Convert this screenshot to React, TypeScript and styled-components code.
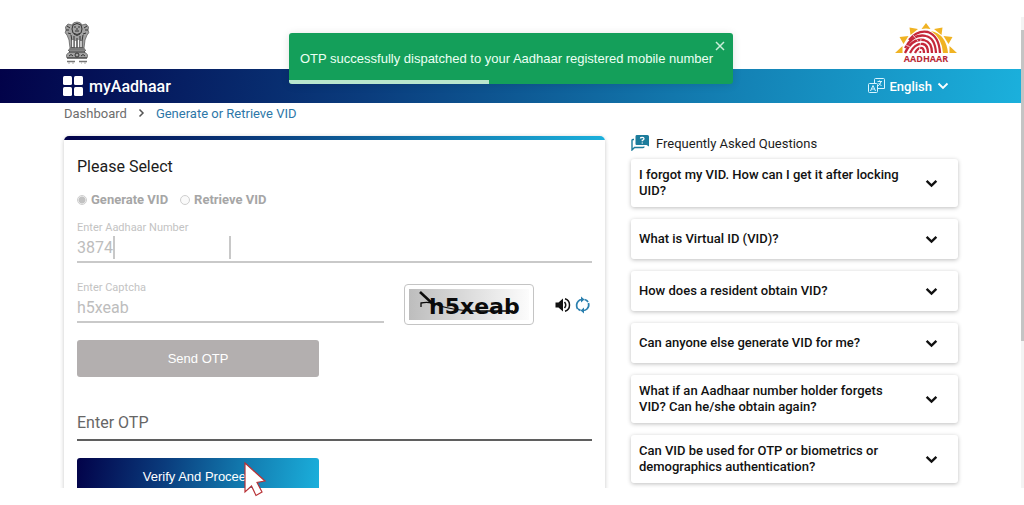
import React from "react";
import styled, { createGlobalStyle } from "styled-components";

const brandGradient = "linear-gradient(100deg, #020249 0%, #0a3c7d 36%, #1277ac 66%, #1bb0dc 100%)";

const GlobalStyle = createGlobalStyle`
  *, *::before, *::after { box-sizing: border-box; }
  body { margin: 0; background: #fff; font-family: Roboto, "Liberation Sans", sans-serif; color: #1c1c1c; }
  button, input { font-family: inherit; }
`;

const Screen = styled.div`
  position: relative;
  height: 100vh;
  padding: 17px 0;
  display: flex;
  overflow: hidden;
`;

const Page = styled.div`
  flex: 1;
  min-width: 0;
  overflow: hidden;
`;

const ScrollTrack = styled.div`
  width: 3px;
  padding-top: 13px;
  background: #f3f3f3;
`;

const ScrollThumb = styled.div`
  height: 68%;
  background: #c4c4c4;
`;

const Masthead = styled.header`
  display: flex;
  justify-content: space-between;
  align-items: flex-start;
  height: 52px;
  padding: 4px 64px 0;
`;

const NavBar = styled.nav`
  display: flex;
  justify-content: space-between;
  align-items: center;
  height: 34px;
  padding: 0 72px 0 63px;
  background: ${brandGradient};
  color: #fff;
`;

const Brand = styled.a`
  display: flex;
  align-items: center;
  gap: 6px;
  color: #fff;
  font-size: 16px;
  font-weight: 500;
  text-decoration: none;
`;

const LanguageButton = styled.button`
  display: flex;
  align-items: center;
  gap: 5px;
  padding: 0;
  border: 0;
  background: none;
  color: #fff;
  font-size: 13px;
  font-weight: 500;
`;

const Breadcrumb = styled.div`
  display: flex;
  align-items: center;
  gap: 11px;
  height: 20px;
  padding: 0 64px;
`;

const Crumb = styled.a<{ $current?: boolean }>`
  color: ${(p) => (p.$current ? "#2d77a8" : "#6d6d6d")};
  font-size: 13px;
  text-decoration: none;
`;

const Columns = styled.main`
  display: grid;
  grid-template-columns: minmax(0, 1fr) 327px;
  gap: 26px;
  align-items: start;
  padding: 13px 63px 0 64px;
`;

const Card = styled.section`
  border-radius: 5px;
  overflow: hidden;
  box-shadow: 0 1px 4px rgba(0, 0, 0, 0.22);
`;

const CardStripe = styled.div`
  height: 4px;
  background: ${brandGradient};
`;

const Form = styled.form`
  padding: 17px 13px;
`;

const FormTitle = styled.h1`
  margin: 0;
  font-size: 16px;
  line-height: 20px;
  font-weight: 400;
`;

const RadioGroup = styled.div`
  display: flex;
  gap: 12px;
  margin-top: 15px;
`;

const RadioLabel = styled.label`
  display: flex;
  align-items: center;
  gap: 4px;
  color: #a6a6a6;
  font-size: 13px;
  line-height: 16px;
  font-weight: 700;
`;

const Radio = styled.input`
  appearance: none;
  width: 10px;
  height: 10px;
  margin: 0;
  border: 1px solid #cfcfcf;
  border-radius: 50%;
  background: #fafafa;
  &:checked {
    background: radial-gradient(circle, #c2c2c2 0 3px, #fafafa 4px);
  }
`;

const Field = styled.div<{ $active?: boolean }>`
  position: relative;
  display: flex;
  flex-direction: column;
  flex: 1;
  border-bottom: 2px solid ${(p) => (p.$active ? "#5f5f5f" : "#c9c9c9")};
`;

const FieldLabel = styled.label`
  color: #c3c3c3;
  font-size: 11px;
  line-height: 14px;
`;

const FieldInput = styled.input`
  width: 100%;
  height: 26px;
  padding: 0 0 2px;
  border: 0;
  background: none;
  color: #bdbdbd;
  font-size: 16px;
  &::placeholder { color: #666; opacity: 1; }
`;

const OtpInput = styled(FieldInput)`
  height: 30px;
  padding-bottom: 4px;
`;

const Mask = styled.span`
  position: absolute;
  left: 36px;
  bottom: 2px;
  width: 118px;
  height: 23px;
  border: solid #c8c8c8;
  border-width: 0 2px;
  background: #fff;
`;

const NumberRow = styled.div`
  display: flex;
  margin-top: 13px;
`;

const CaptchaRow = styled.div`
  display: flex;
  align-items: flex-end;
  margin-top: 18px;
`;

const CaptchaFrame = styled.div`
  display: flex;
  width: 130px;
  height: 41px;
  margin: 0 20px -2px 20px;
  padding: 4px;
  border: 1px solid #c4c4c4;
  border-radius: 4px;
`;

const CaptchaTools = styled.div`
  display: flex;
  gap: 2px;
  height: 27px;
`;

const IconButton = styled.button`
  display: flex;
  width: 18px;
  height: 18px;
  padding: 0;
  border: 0;
  background: none;
`;

const ActionButton = styled.button<{ $primary?: boolean }>`
  display: block;
  width: 47%;
  height: 37px;
  border: 0;
  border-radius: 3px;
  background: ${(p) => (p.$primary ? brandGradient : "#b3afaf")};
  color: #fff;
  font-family: "Liberation Sans", sans-serif;
  font-size: 13px;
  margin-top: 17px;
`;

const OtpRow = styled.div`
  display: flex;
  margin-top: 32px;
`;

const FaqHeading = styled.h2`
  display: flex;
  align-items: center;
  gap: 7px;
  height: 16px;
  margin: -1px 0 8px;
  font-size: 13px;
  font-weight: 400;
`;

const FaqList = styled.div`
  display: flex;
  flex-direction: column;
  gap: 12px;
`;

const FaqItem = styled.button`
  display: flex;
  align-items: center;
  justify-content: space-between;
  min-height: 40px;
  padding: 8px 20px 8px 8px;
  border: 0;
  border-radius: 3px;
  background: #fff;
  box-shadow: 0 1px 4px rgba(0, 0, 0, 0.26);
  color: #111;
  font-size: 13px;
  line-height: 16px;
  font-weight: 500;
  text-align: left;
`;

const FaqText = styled.span`
  flex: 0 1 268px;
`;

const Toast = styled.div`
  position: absolute;
  top: 33px;
  left: 50%;
  width: 444px;
  height: 51px;
  margin-left: -223px;
  padding: 0 11px;
  display: flex;
  align-items: center;
  overflow: hidden;
  border-radius: 3px;
  background: #149f5a;
  box-shadow: 0 1px 8px rgba(0, 0, 0, 0.12);
  color: #ecfff4;
  font-family: "Liberation Sans", sans-serif;
  font-size: 13px;
  white-space: nowrap;
`;

const ToastClose = styled.button`
  position: absolute;
  top: 8px;
  right: 8px;
  display: flex;
  padding: 0;
  border: 0;
  background: none;
`;

const ToastProgress = styled.div`
  position: absolute;
  left: 0;
  bottom: 0;
  width: 45%;
  height: 4px;
  background: #b9e6cd;
`;

const Pointer = styled.svg`
  position: absolute;
  left: 243px;
  top: 461px;
`;

const Emblem = () => (
  <svg width="26" height="43" viewBox="0 0 26 43" role="img" aria-label="National emblem">
    <g fill="#a2a2a2" stroke="#555" strokeWidth="0.7">
      <path d="M8 4Q9 1 13 1Q17 1 18 4L22 3Q26 6 24 9Q26 12 23 14L21 19L20 27H6L5 19L3 14Q0 12 2 9Q0 6 4 3Z" />
      <path d="M4 29H22L20 31Q25 33 23 37H3Q1 33 6 31Z" />
    </g>
    <g fill="none" stroke="#333" strokeWidth="1">
      <path d="M9 4Q13 1 17 4Q19 8 17 12Q13 15 9 12Q7 8 9 4M10 6H12M14 6H16M13 7V9M11 10H15M10 13Q13 16 16 13M3 5L6 7M2 9H5M4 12L7 13M23 5L20 7M24 9H21M22 12L19 13" />
      <path d="M7 14L8 20V27M10 15V27M13 17V27M16 15V27M19 14L18 20V27M5 28H21M5 31H21M3 37H23" />
      <circle cx="13" cy="34" r="2" /><path d="M5 35Q7 32 9 35M17 35Q19 32 21 35" />
    </g>
    <g stroke="#fff" strokeWidth="1.2"><path d="M8.7 19V26M14.5 19V26M11.5 20V26M17 20V26" /></g>
    <path d="M3 40.5H11M15 40.5H23" stroke="#777" strokeWidth="1.4" />
    <path d="M4 42H6M8 42H10M17 42H18M20 42H22" stroke="#aaa" strokeWidth="1" />
  </svg>
);

const AadhaarLogo = () => (
  <svg width="62" height="44" viewBox="0 0 62 44" role="img" aria-label="Aadhaar">
    <g fill="#f0b323">
      <path d="M31 2L35.5 8Q31 7 26.5 8ZM14.500 6.500L23 8L15.500 14ZM47.500 6.500L39 8L46.500 14ZM4.500 16L13.500 15L8.500 23ZM57.500 16L48.500 15L53.500 23ZM0 32L7.500 25V32ZM62 32L54.500 25V32Z" />
      <path d="M36 10Q51 13 53 32H48Q47 17 36 10Z" />
    </g>
    <g fill="none" stroke="#c5283a" strokeWidth="2.300">
      <path d="M14 19Q22 9 33 11Q44 15 45 32" />
      <path d="M10 27Q19 12 31 15Q40 17 41 32" />
      <path d="M10 32Q17 17 29 19Q37 21 37 32" />
      <path d="M15 32Q20 22 28 23Q33 24 33 32" />
      <path d="M20 32Q23 26 27 27Q29 28 29 32" />
      <path d="M25 32V30" />
    </g>
    <path d="M9 23L15 26M18 14L23 20M26 18L24 32" stroke="#fff" strokeWidth="0.7" />
    <text x="31" y="41" textAnchor="middle" fontFamily="Open Sans, sans-serif" fontSize="9" fontWeight="700" fill="#b82834">AADHAAR</text>
  </svg>
);

const Chevron = ({ size = 12, weight = 2 }: { size?: number; weight?: number }) => (
  <svg width={size} height={size} viewBox="0 0 12 12" fill="none" stroke="currentColor" strokeWidth={weight}>
    <path d="M1.500 3.500L6 8L10.500 3.500" />
  </svg>
);

const faqs = [
  "I forgot my VID. How can I get it after locking UID?",
  "What is Virtual ID (VID)?",
  "How does a resident obtain VID?",
  "Can anyone else generate VID for me?",
  "What if an Aadhaar number holder forgets VID? Can he/she obtain again?",
  "Can VID be used for OTP or biometrics or demographics authentication?",
];

export default function App() {
  return (
    <Screen>
      <GlobalStyle />
      <Page>
        <Masthead>
          <Emblem />
          <AadhaarLogo />
        </Masthead>
        <NavBar>
          <Brand href="#">
            <svg width="20" height="20" viewBox="0 0 20 20" fill="#fff">
              <rect width="9" height="9" rx="1.500" /><rect x="11" width="9" height="9" rx="1.500" />
              <rect y="11" width="9" height="9" rx="1.500" /><rect x="11" y="11" width="9" height="9" rx="1.500" />
            </svg>
            myAadhaar
          </Brand>
          <LanguageButton type="button">
            <svg width="17" height="16" viewBox="0 0 17 16" fill="none" stroke="#d9f4ff" strokeWidth="1">
              <path d="M6.500 5V1.500Q6.500 0.500 7.500 0.500H15.500Q16.500 0.500 16.500 1.500V10.500H10" />
              <rect x="0.500" y="5.500" width="9" height="9" rx="1" />
              <path d="M2.500 13L5 7.500L7.500 13M3.500 11H6.500M9.500 3.500H14M11.500 2.500V4M13 3.500Q12.500 6 10 8M10.500 5L13.500 8" />
            </svg>
            English
            <Chevron weight={1.8} />
          </LanguageButton>
        </NavBar>
        <Breadcrumb>
          <Crumb href="#">Dashboard</Crumb>
          <svg width="7" height="10" viewBox="0 0 7 10" fill="none" stroke="#555" strokeWidth="1.500">
            <path d="M1.500 1.500L5 5L1.500 8.500" />
          </svg>
          <Crumb href="#" $current>Generate or Retrieve VID</Crumb>
        </Breadcrumb>
        <Columns>
          <Card>
            <CardStripe />
            <Form>
              <FormTitle>Please Select</FormTitle>
              <RadioGroup>
                <RadioLabel><Radio type="radio" name="mode" defaultChecked disabled />Generate VID</RadioLabel>
                <RadioLabel><Radio type="radio" name="mode" disabled />Retrieve VID</RadioLabel>
              </RadioGroup>
              <NumberRow>
                <Field>
                  <FieldLabel htmlFor="number">Enter Aadhaar Number</FieldLabel>
                  <FieldInput id="number" defaultValue="3874" disabled />
                  <Mask />
                </Field>
              </NumberRow>
              <CaptchaRow>
                <Field>
                  <FieldLabel htmlFor="captcha">Enter Captcha</FieldLabel>
                  <FieldInput id="captcha" defaultValue="h5xeab" disabled />
                </Field>
                <CaptchaFrame>
                  <svg width="120" height="31" viewBox="0 0 120 31">
                    <defs>
                      <linearGradient id="captchaShade">
                        <stop offset="0" stopColor="#bdbdbd" /><stop offset="1" stopColor="#fcfcfc" />
                      </linearGradient>
                    </defs>
                    <rect width="120" height="31" fill="url(#captchaShade)" />
                    <text x="20" y="25" fontFamily="DejaVu Sans, sans-serif" fontSize="22" fontWeight="700" fill="#0b0b0b">h5xeab</text>
                    <path d="M11 3L25 16" stroke="#0b0b0b" strokeWidth="2.500" />
                    <path d="M12 18V14Q22 12 31 17Q45 21 62 22H104" fill="none" stroke="#0b0b0b" strokeWidth="1.300" />
                  </svg>
                </CaptchaFrame>
                <CaptchaTools>
                  <IconButton type="button" aria-label="Play captcha">
                    <svg width="18" height="18" viewBox="0 0 18 18">
                      <path d="M1.500 6.500H4.500L9 2.500V15.500L4.500 11.500H1.500Z" fill="#111" />
                      <path d="M10.500 6Q13 9 10.500 12M11 2.800Q15.500 4 15.500 9Q15.500 14 11 15.200" fill="none" stroke="#111" strokeWidth="1.500" />
                    </svg>
                  </IconButton>
                  <IconButton type="button" aria-label="Refresh captcha">
                    <svg width="18" height="18" viewBox="0 0 18 18" fill="none" stroke="#2a7fae" strokeWidth="1.700">
                      <path d="M3.500 13Q1.500 8.500 4 5.500Q5.500 3.500 8 3.500M10.500 3.500Q13 4 14 6M14.500 7Q15.500 10.500 13 13Q11.500 14.500 9 14.500M6.500 14.500L4 13" />
                      <path d="M7 0.500V6.500L10.500 3.500ZM10 11.500V17.500L6.500 14.500Z" fill="#2a7fae" strokeWidth="0" />
                    </svg>
                  </IconButton>
                </CaptchaTools>
              </CaptchaRow>
              <ActionButton type="button" disabled>Send OTP</ActionButton>
              <OtpRow>
                <Field $active>
                  <OtpInput aria-label="Enter OTP" placeholder="Enter OTP" />
                </Field>
              </OtpRow>
              <ActionButton type="button" $primary>Verify And Proceed</ActionButton>
            </Form>
          </Card>
          <section>
            <FaqHeading>
              <svg width="18" height="16" viewBox="0 0 18 16">
                <path d="M5.500 0H16.500Q18 0 18 1.500V11.500L15.500 10H5.500Q4.500 10 4.500 9V1.500Q4.500 0 5.500 0Z" fill="#1c7c9c" />
                <path d="M3 4.500H2Q1 4.500 1 5.500V15L3.500 12.500H12Q13 12.500 13 11.500" fill="none" stroke="#1c7c9c" strokeWidth="1.400" />
                <path d="M9.500 3.500Q9.500 2.300 11.200 2.300Q13 2.300 13 3.700Q13 4.600 11.300 5.300V6.300M11.300 7.400V8.500" fill="none" stroke="#fff" strokeWidth="1.300" />
              </svg>
              Frequently Asked Questions
            </FaqHeading>
            <FaqList>
              {faqs.map((question) => (
                <FaqItem key={question} type="button" aria-expanded="false">
                  <FaqText>{question}</FaqText>
                  <Chevron size={13} weight={2.2} />
                </FaqItem>
              ))}
            </FaqList>
          </section>
        </Columns>
      </Page>
      <ScrollTrack><ScrollThumb /></ScrollTrack>
      <Toast role="status">
        OTP successfully dispatched to your Aadhaar registered mobile number
        <ToastClose type="button" aria-label="Close">
          <svg width="10" height="10" viewBox="0 0 10 10" stroke="#c9eeda" strokeWidth="1.500">
            <path d="M1 1L9 9M9 1L1 9" />
          </svg>
        </ToastClose>
        <ToastProgress />
      </Toast>
      <Pointer width="24" height="37" viewBox="0 0 24 37" fill="#fff" stroke="#b83236" strokeWidth="1.200">
        <path d="M2 2L22 20L14 21.500L19 31L13 34.500L8.500 25L2 31Z" />
      </Pointer>
    </Screen>
  );
}
